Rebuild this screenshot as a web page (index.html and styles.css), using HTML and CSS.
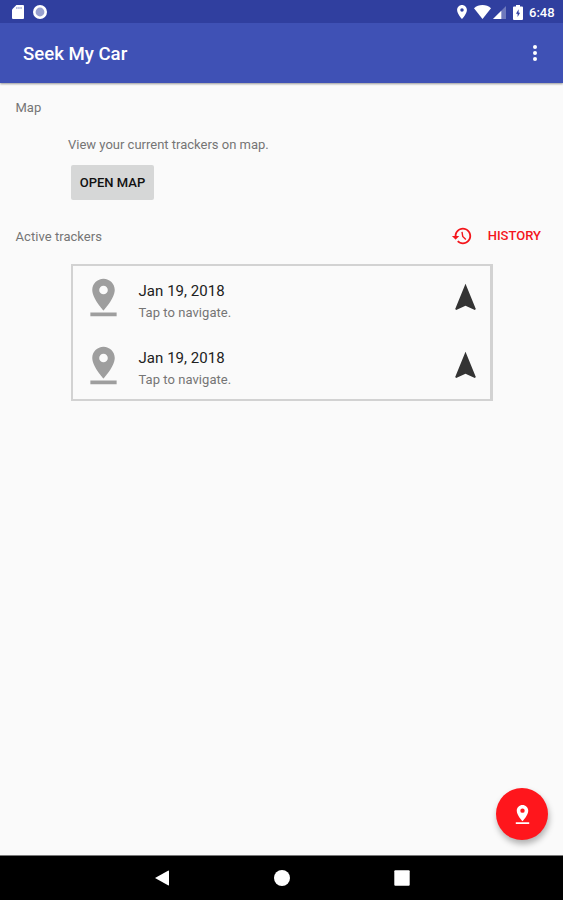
FILE: index.html
```html
<!DOCTYPE html>
<html lang="en">
<head>
<meta charset="utf-8">
<title>Seek My Car</title>
<link rel="stylesheet" href="styles.css">
</head>
<body>
<svg class="defs" aria-hidden="true">
  <symbol id="pin-drop" viewBox="0 0 24 24"><path fill-rule="evenodd" d="M18 8c0-3.310-2.690-6-6-6S6 4.690 6 8c0 4.500 6 11 6 11s6-6.500 6-11zM9.700 8a2.300 2.300 0 1 1 4.600 0a2.300 2.300 0 1 1-4.600 0zM5 20v2h14v-2H5z"/></symbol>
  <symbol id="navigation" viewBox="0 0 24 24"><path d="M12 2L4.500 20.290l.71.71L12 18l6.790 3 .71-.71z"/></symbol>
</svg>
<header class="top">
  <div class="status">
    <svg class="sd" viewBox="0 0 12 14"><path d="M4.400 0H11a1 1 0 0 1 1 1v12a1 1 0 0 1-1 1H1a1 1 0 0 1-1-1V4.400z"/><path class="notch" d="M4.300 2h1.100v2H4.300zM6.400 2h1.100v2H6.400zM8.500 2h1.100v2H8.500z"/></svg>
    <svg class="sync" viewBox="0 0 14 14"><circle class="disc" cx="7" cy="7" r="5.700"/></svg>
    <span class="grow"></span>
    <svg class="loc" viewBox="5 2 14 20"><path d="M12 2C8.130 2 5 5.130 5 9c0 5.250 7 13 7 13s7-7.750 7-13c0-3.870-3.130-7-7-7zm0 9.500a2.500 2.500 0 0 1 0-5 2.500 2.500 0 0 1 0 5z"/></svg>
    <svg class="wifi" viewBox="0 0 17 14"><path d="M8.500 14L0 3.200C2.300 1.100 5.300 0 8.500 0S14.700 1.100 17 3.200z"/></svg>
    <svg class="cell" viewBox="0 0 13 13"><path class="dim" d="M13 0v13H0z"/><path d="M8.300 4.700V13H0z"/></svg>
    <svg class="battery" viewBox="0 0 10 15"><path d="M3 0h4v1.500h2a1 1 0 0 1 1 1V14a1 1 0 0 1-1 1H1a1 1 0 0 1-1-1V2.500a1 1 0 0 1 1-1h2z"/><path class="bolt" d="M5.600 4.300L3 8.800h1.600v3.200l2.500-4.300h-1.500z"/></svg>
    <span class="clock">6:48</span>
  </div>
  <div class="appbar">
    <h1>Seek My Car</h1>
    <svg class="more" viewBox="0 0 4 16"><circle cx="2" cy="2" r="2"/><circle cx="2" cy="8" r="2"/><circle cx="2" cy="14" r="2"/></svg>
  </div>
</header>
<main>
  <h2 class="map-title">Map</h2>
  <p class="hint">View your current trackers on map.</p>
  <button class="open">OPEN MAP</button>
  <div class="section">
    <h2>Active trackers</h2>
    <a class="history"><svg viewBox="0 0 24 24"><path d="M13 3c-4.970 0-9 4.030-9 9H1l3.890 3.890.07.14L9 12H6c0-3.870 3.130-7 7-7s7 3.130 7 7-3.130 7-7 7c-1.930 0-3.680-.79-4.940-2.060l-1.420 1.420C8.270 19.990 10.510 21 13 21c4.970 0 9-4.030 9-9s-4.030-9-9-9z"/><path class="hand" d="M12 7.500l.8 5 3.400 3.300"/></svg><span>HISTORY</span></a>
  </div>
  <ul class="list">
    <li><svg class="pin"><use href="#pin-drop"/></svg><div class="info"><strong>Jan 19, 2018</strong><span>Tap to navigate.</span></div><svg class="nav-arrow"><use href="#navigation"/></svg></li>
    <li><svg class="pin"><use href="#pin-drop"/></svg><div class="info"><strong>Jan 19, 2018</strong><span>Tap to navigate.</span></div><svg class="nav-arrow"><use href="#navigation"/></svg></li>
  </ul>
  <button class="fab" aria-label="Add tracker"><svg><use href="#pin-drop"/></svg></button>
</main>
<nav class="sysnav">
  <svg viewBox="0 0 16 16"><path d="M1 8L14 .7Q15 .2 15 1.200V14.800Q15 15.800 14 15.300z"/></svg>
  <svg viewBox="0 0 16 16"><circle cx="8" cy="8" r="8"/></svg>
  <svg viewBox="0 0 16 16"><rect x=".3" y=".3" width="15.400" height="15.400" rx="1"/></svg>
</nav>
</body>
</html>
```
FILE: styles.css
```css
* { box-sizing: border-box; }
body {
  margin: 0;
  height: 900px;
  display: flex;
  flex-direction: column;
  background: #fafafa;
  font-family: Roboto, sans-serif;
  overflow: hidden;
}
svg { display: block; flex: none; fill: currentColor; }
.defs { position: absolute; width: 0; height: 0; }
h1, h2, p, ul { margin: 0; padding: 0; }
.top { color: #fff; background: #3f51b5; height: 83px; box-shadow: 0 1px 2px rgba(0, 0, 0, .4); }
.status { height: 23px; background: #303f9f; display: flex; align-items: center; padding: 1px 8px 0 12px; }
.sd { width: 12px; height: 14px; }
.notch { fill: #98a0cf; }
.bolt { fill: #303f9f; }
.sync { width: 14px; height: 14px; margin-left: 9px; }
.disc { fill: #98a0cf; stroke: #fff; stroke-width: 2.6; }
.grow { flex: 1; }
.loc { width: 10px; height: 14px; margin-right: 7px; }
.wifi { width: 17px; height: 14px; margin-right: 2px; }
.cell { width: 13px; height: 13px; margin-right: 7px; }
.dim { opacity: .3; }
.battery { width: 10px; height: 15px; margin-right: 6px; }
.clock { font-size: 13px; font-weight: 500; width: 26px; white-space: nowrap; }
.appbar { height: 60px; display: flex; align-items: center; justify-content: space-between; padding: 0 26px 0 23px; }
h1 { font-size: 18.6px; font-weight: 500; padding-top: 2px; }
.more { width: 4px; height: 16px; }
main { flex: 1; display: flex; flex-direction: column; color: #757575; font-size: 13px; }
h2 { font-size: 13px; font-weight: 400; line-height: 16px; }
.map-title { margin: 17px 0 0 15.500px; }
.hint { margin: 21px 0 0 68px; line-height: 16px; }
button { border: 0; padding: 0; font: 500 13px Roboto, sans-serif; }
.open { margin: 12px 0 0 71px; width: 83px; height: 35px; background: #d6d7d7; color: #111; border-radius: 2px; }
.section { display: flex; align-items: center; justify-content: space-between; margin-top: 24px; padding: 0 22px 0 15.500px; height: 24px; }
.section h2 { padding-top: 1px; letter-spacing: .05px; }
.history { display: flex; align-items: center; gap: 15px; color: #f4161c; font-size: 13px; font-weight: 500; }
.history svg { width: 22px; height: 22px; }
.history span { padding-bottom: 2px; }
.hand { fill: none; stroke: currentColor; stroke-width: 1.500; }
.list { list-style: none; margin: 16px 0 0 70.500px; width: 422.500px; height: 137px; border: 2px solid #d2d2d2; border-right-width: 3px; }
.list li { height: 67.500px; display: flex; align-items: center; padding: 0 8.500px 4px 8.500px; }
.pin { width: 45px; height: 45px; color: #9e9e9e; }
.info { flex: 1; margin: 8px 0 0 12.500px; display: flex; flex-direction: column; }
.info strong { color: #212121; font-weight: 400; font-size: 15px; line-height: 22px; letter-spacing: .05px; }
.info span { line-height: 22px; letter-spacing: .05px; }
.nav-arrow { width: 33px; height: 33px; color: #333; }
.fab { width: 52px; height: 52px; margin: auto 15px 15px auto; border-radius: 50%; background: #ff161c; color: #fff; display: grid; place-items: center; box-shadow: 1px 4px 6px rgba(0, 0, 0, .3); }
.fab svg { width: 23px; height: 23px; }
.sysnav { height: 45px; background: #000; color: #fff; border-top: 1px solid #777; display: flex; justify-content: center; align-items: center; gap: 104px; }
.sysnav svg { width: 16px; height: 16px; }
```
